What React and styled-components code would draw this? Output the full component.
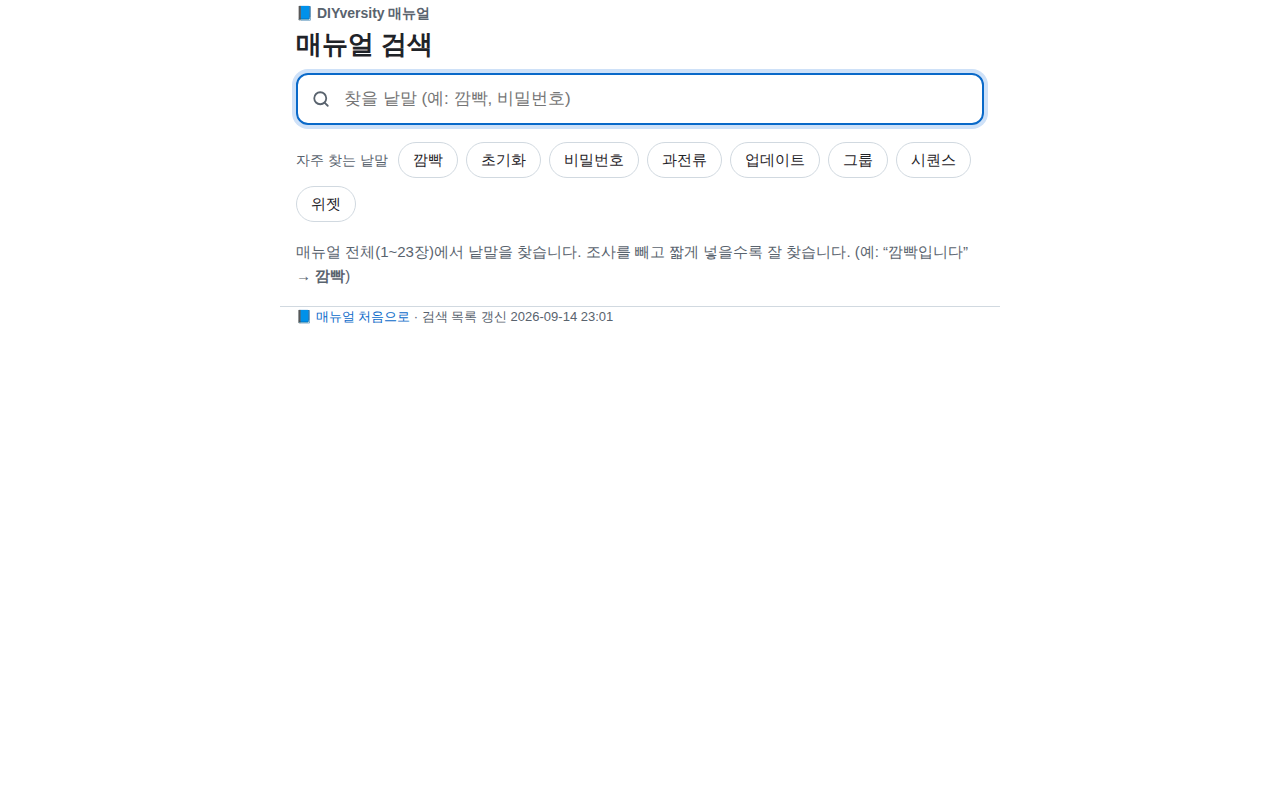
import React from 'react';
import styled, { createGlobalStyle } from 'styled-components';

const words = ['깜빡', '초기화', '비밀번호', '과전류', '업데이트', '그룹', '시퀀스', '위젯'];

const App = () => {
  const [query, setQuery] = React.useState('');

  return (
    <>
      <GlobalStyle />
      <Page>
        <Header>
          <Brand>📘 DIYversity 매뉴얼</Brand>
          <Title>매뉴얼 검색</Title>
        </Header>

        <SearchBox>
          <SearchIcon viewBox="0 0 24 24" aria-hidden="true">
            <circle cx="11" cy="11" r="8" />
            <path d="M21 21l-4.3-4.3" />
          </SearchIcon>
          <SearchInput
            type="text"
            aria-label="매뉴얼 검색"
            placeholder="찾을 낱말 (예: 깜빡, 비밀번호)"
            value={query}
            onChange={(e) => setQuery(e.target.value)}
            autoFocus
          />
        </SearchBox>

        <Words>
          <WordsLabel>자주 찾는 낱말</WordsLabel>
          {words.map((word) => (
            <WordButton key={word} type="button" onClick={() => setQuery(word)}>
              {word}
            </WordButton>
          ))}
        </Words>

        <Hint>
          매뉴얼 전체(1~23장)에서 낱말을 찾습니다. 조사를 빼고 짧게 넣을수록 잘 찾습니다. (예: “깜빡입니다” → <b>깜빡</b>)
        </Hint>

        <Footer>
          <HomeLink href="#">📘 매뉴얼 처음으로</HomeLink> · 검색 목록 갱신 2026-09-14 23:01
        </Footer>
      </Page>
    </>
  );
};

export default App;

const GlobalStyle = createGlobalStyle`
  * {
    box-sizing: border-box;
  }

  body {
    margin: 0;
    background: #fff;
    color: #1f2328;
    font-family: "Liberation Sans", sans-serif;
    word-break: keep-all;
  }
`;

const Page = styled.main`
  max-width: 720px;
  margin: 0 auto;
`;

const Header = styled.header`
  padding: 3px 16px 12px;
`;

const Brand = styled.div`
  color: #59636e;
  font-size: 14px;
  font-weight: 700;
  line-height: 20px;
`;

const Title = styled.h1`
  margin: 4px 0 0;
  font-size: 26px;
  line-height: 34px;
`;

const SearchBox = styled.label`
  display: flex;
  align-items: center;
  gap: 14px;
  height: 52px;
  margin: 0 16px;
  padding: 0 14px;
  border: 2px solid #d1d9e0;
  border-radius: 12px;

  &:focus-within {
    border-color: #0969c9;
    box-shadow: 0 0 0 4px #cee1f8;
  }
`;

const SearchIcon = styled.svg`
  flex: none;
  width: 18px;
  height: 18px;
  fill: none;
  stroke: #59636e;
  stroke-width: 2.4;
  stroke-linecap: round;
`;

const SearchInput = styled.input`
  flex: 1;
  min-width: 0;
  padding: 0;
  border: 0;
  outline: 0;
  background: none;
  color: inherit;
  font-family: inherit;
  font-size: 17px;

  &::placeholder {
    color: #757575;
  }
`;

const Words = styled.div`
  display: flex;
  flex-wrap: wrap;
  align-items: center;
  gap: 8px;
  padding: 17px 16px 0;
`;

const WordsLabel = styled.span`
  margin-right: 2px;
  color: #59636e;
  font-size: 14px;
  line-height: 24px;
`;

const WordButton = styled.button`
  height: 36px;
  padding: 0 14px;
  border: 1px solid #d1d9e0;
  border-radius: 18px;
  background: #fff;
  color: #1f2328;
  font-family: inherit;
  font-size: 15px;
  cursor: pointer;
`;

const Hint = styled.p`
  margin: 18px 16px;
  color: #59636e;
  font-size: 15px;
  line-height: 24px;
`;

const Footer = styled.footer`
  padding: 0 16px;
  border-top: 1px solid #d1d9e0;
  color: #59636e;
  font-size: 13px;
  line-height: 20px;
`;

const HomeLink = styled.a`
  color: #0969c9;
  text-decoration: none;
`;
